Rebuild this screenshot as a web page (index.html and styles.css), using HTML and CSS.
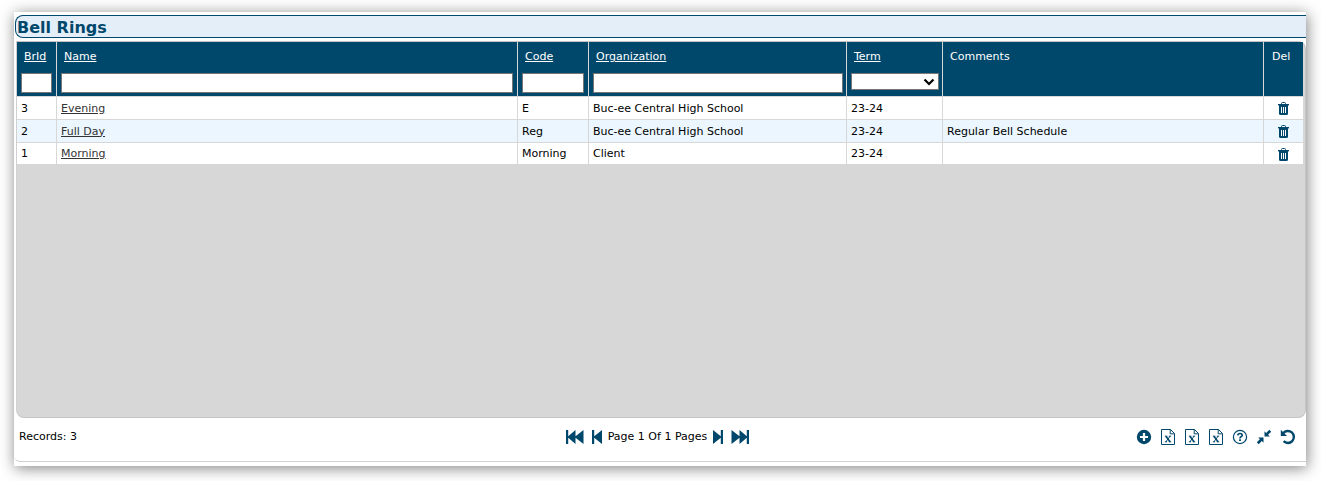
FILE: index.html
```html
<!DOCTYPE html>
<html lang="en">
<head>
  <meta charset="utf-8">
  <title>Bell Rings</title>
  <link rel="stylesheet" href="styles.css">
</head>
<body>

<svg class="sprite" aria-hidden="true">
  <symbol id="trash" viewBox="0 0 11 13">
    <path d="M1 3h9v8.500Q10 13 8.500 13h-6Q1 13 1 11.500z"/>
    <path d="M0 2h11v1.400H0z"/>
    <path d="M3.500 2V1.500q0-1 1-1h2q1 0 1 1V2" fill="none" stroke="currentColor"/>
    <path d="M3.500 5v6M5.500 5v6M7.500 5v6" stroke="#fff"/>
  </symbol>
  <symbol id="excel" viewBox="0 0 14 16">
    <path d="M.5.500h9l4 4v11H.5zM9.200.500V4.800h4.300" fill="none" stroke="currentColor"/>
    <path d="M4.900 7.200l4.200 5.600" stroke="currentColor" stroke-width="1.600"/>
    <path d="M9.100 7.200l-4.200 5.600M3.800 7.200h2.500M7.800 7.200h2.300M3.800 12.800h2.300M7.700 12.800h2.500" stroke="currentColor"/>
  </symbol>
</svg>

<main class="panel">
  <h1 class="title">Bell Rings</h1>

  <div class="grid">
    <table>
      <colgroup>
        <col class="col-id">
        <col>
        <col class="col-code">
        <col class="col-org">
        <col class="col-term">
        <col class="col-comments">
        <col class="col-del">
      </colgroup>
      <thead>
        <tr>
          <th><a href="#">BrId</a><input type="text" aria-label="BrId"></th>
          <th><a href="#">Name</a><input type="text" aria-label="Name"></th>
          <th><a href="#">Code</a><input type="text" aria-label="Code"></th>
          <th><a href="#">Organization</a><input type="text" aria-label="Organization"></th>
          <th>
            <a href="#">Term</a>
            <div class="select-wrap">
              <select aria-label="Term"><option></option></select>
              <svg class="chevron" viewBox="0 0 12 8"><path d="M1.500 1.500L6 6l4.500-4.500" fill="none" stroke="#000" stroke-width="2.200"/></svg>
            </div>
          </th>
          <th><span>Comments</span></th>
          <th><span>Del</span></th>
        </tr>
      </thead>
      <tbody>
        <tr>
          <td>3</td>
          <td><a href="#">Evening</a></td>
          <td>E</td>
          <td>Buc-ee Central High School</td>
          <td>23-24</td>
          <td></td>
          <td class="del"><button type="button" aria-label="Delete Evening"><svg width="11" height="13"><use href="#trash"/></svg></button></td>
        </tr>
        <tr>
          <td>2</td>
          <td><a href="#">Full Day</a></td>
          <td>Reg</td>
          <td>Buc-ee Central High School</td>
          <td>23-24</td>
          <td>Regular Bell Schedule</td>
          <td class="del"><button type="button" aria-label="Delete Full Day"><svg width="11" height="13"><use href="#trash"/></svg></button></td>
        </tr>
        <tr>
          <td>1</td>
          <td><a href="#">Morning</a></td>
          <td>Morning</td>
          <td>Client</td>
          <td>23-24</td>
          <td></td>
          <td class="del"><button type="button" aria-label="Delete Morning"><svg width="11" height="13"><use href="#trash"/></svg></button></td>
        </tr>
      </tbody>
    </table>
  </div>

  <div class="footer">
    <div class="records">Records: 3</div>

    <div class="pager">
      <button type="button" aria-label="First page"><svg width="18" height="14" viewBox="0 0 18 14"><path d="M0 0h2.200v6.200L9.500 0v6.200L17.500 0v14L9.500 7.800V14L2.200 7.800V14H0z"/></svg></button>
      <button type="button" aria-label="Previous page"><svg width="10" height="14" viewBox="0 0 10 14"><path d="M0 0h2.200v6.200L10 0v14L2.200 7.800V14H0z"/></svg></button>
      <span>Page 1 Of 1 Pages</span>
      <button type="button" aria-label="Next page"><svg width="10" height="14" viewBox="0 0 10 14"><path d="M10 0H7.800v6.200L0 0v14l7.800-6.200V14H10z"/></svg></button>
      <button type="button" aria-label="Last page"><svg width="18" height="14" viewBox="0 0 18 14"><path d="M18 0h-2.200v6.200L8.500 0v6.200L.5 0v14l8-6.200V14l7.300-6.200V14H18z"/></svg></button>
    </div>

    <div class="tools">
      <button type="button" aria-label="Add"><svg width="16" height="16" viewBox="0 0 16 16"><circle cx="8" cy="8" r="7.200"/><path d="M8 4v8M4 8h8" stroke="#fff" stroke-width="2.200"/></svg></button>
      <button type="button" aria-label="Export"><svg width="14" height="16"><use href="#excel"/></svg></button>
      <button type="button" aria-label="Export all"><svg width="14" height="16"><use href="#excel"/></svg></button>
      <button type="button" aria-label="Export template"><svg width="14" height="16"><use href="#excel"/></svg></button>
      <button type="button" aria-label="Help"><svg width="16" height="16" viewBox="0 0 16 16"><circle cx="8" cy="8" r="6.600" fill="none" stroke="currentColor" stroke-width="1.200"/><path d="M5.800 6.300Q6 4.500 8 4.500q2.200 0 2.200 1.700 0 1-1.200 1.600Q8 8.300 8 9.400" fill="none" stroke="currentColor" stroke-width="1.700"/><path d="M7.100 10.300h1.800V12H7.100z"/></svg></button>
      <button type="button" aria-label="Collapse"><svg width="16" height="16" viewBox="0 0 16 16"><path d="M8.500 2.200v5.300h5.300l-1.700-1.700L15.200 2.700 13.300.8 10.200 3.900zM7.500 13.800V8.500H2.200l1.700 1.700L.8 13.300l1.900 1.900 3.100-3.100z"/></svg></button>
      <button type="button" aria-label="Refresh"><svg width="16" height="16" viewBox="0 0 16 16"><path d="M3.200 4.200A6 6 0 1 1 3.600 12.200" fill="none" stroke="currentColor" stroke-width="2.400"/><path d="M.8.800v6.200H7z"/></svg></button>
    </div>
  </div>
</main>

</body>
</html>
```
FILE: styles.css
```css
body {
  margin: 0;
  padding: 12px 15px 15px 14px;
  background: #fff;
  font-family: Verdana, "DejaVu Sans", sans-serif;
  font-size: 11px;
  color: #000;
}

.sprite {
  display: none;
}

.panel {
  padding: 3px 0 4px;
  background: #fff;
  box-shadow: 1px 2px 14px rgba(0, 0, 0, 0.5);
}

.title {
  margin: 0 0 3px 1px;
  padding: 2px 0 0 1px;
  border: 1px solid #00486b;
  border-right: none;
  border-radius: 8px 0 0 8px;
  background: #e4eef9;
  color: #00486b;
  font-size: 16px;
  line-height: 19px;
}

.grid {
  min-height: 375px;
  margin-left: 2px;
  padding-right: 2px;
  border: 1px solid #c4c4c4;
  border-left-color: #d0d0d0;
  border-radius: 8px;
  border-top-left-radius: 0;
  background: #d7d7d7;
}

table {
  width: 100%;
  table-layout: fixed;
  border-collapse: separate;
  border-spacing: 0;
}

.col-id {
  width: 40px;
}

.col-code {
  width: 71px;
}

.col-org {
  width: 258px;
}

.col-term {
  width: 96px;
}

.col-comments {
  width: 321px;
}

.col-del {
  width: 39px;
}

th {
  height: 54px;
  box-sizing: border-box;
  padding: 8px 3px 3px 4px;
  border-right: 1px solid #d7d7d7;
  background: #00486b;
  color: #fff;
  font-weight: normal;
  text-align: left;
  vertical-align: top;
}

th a,
th span {
  display: block;
  padding-left: 3px;
  color: #fff;
  line-height: 14px;
}

th:last-child {
  border-right: none;
}

th:last-child span {
  padding-left: 4px;
}

input,
select {
  display: block;
  box-sizing: border-box;
  width: 100%;
  height: 20px;
  margin: 9px 0 0;
  padding: 0 2px;
  border: 1px solid #767676;
  border-radius: 0;
  background: #fff;
  font: inherit;
}

th:nth-child(-n+3) {
  padding-right: 4px;
}

select {
  height: 17px;
  appearance: none;
}

.select-wrap {
  position: relative;
}

.chevron {
  position: absolute;
  top: 5px;
  right: 4px;
  width: 12px;
  height: 8px;
  pointer-events: none;
}

td {
  height: 23px;
  box-sizing: border-box;
  padding: 0 4px;
  border-top: 1px solid #d7d7d7;
  border-right: 1px solid #d7d7d7;
  background: #fff;
  line-height: 21px;
}

td:last-child {
  border-right: none;
}

tbody tr:nth-child(even) td {
  background: #ebf6ff;
}

tbody tr:last-child td {
  height: 22px;
}

td a {
  color: #333;
}

td.del {
  text-align: center;
}

button {
  display: inline-flex;
  padding: 0;
  border: none;
  background: none;
  color: #00486b;
  cursor: pointer;
}

button svg {
  fill: currentColor;
}

.del button {
  vertical-align: middle;
}

.footer {
  display: grid;
  grid-template-columns: 1fr auto 1fr;
  align-items: center;
  height: 44px;
  padding: 0 10px 6px 5px;
  border-bottom: 1px solid #d0d0d0;
  border-bottom-left-radius: 6px;
  box-sizing: border-box;
}

.pager {
  display: flex;
  align-items: center;
  gap: 8px;
}

.pager span {
  margin: 0 -2px;
}

.tools {
  display: flex;
  justify-content: flex-end;
  align-items: center;
}

.tools button {
  width: 24px;
  justify-content: center;
}

.tools button:last-child {
  width: 16px;
  margin-left: 4px;
}
```
